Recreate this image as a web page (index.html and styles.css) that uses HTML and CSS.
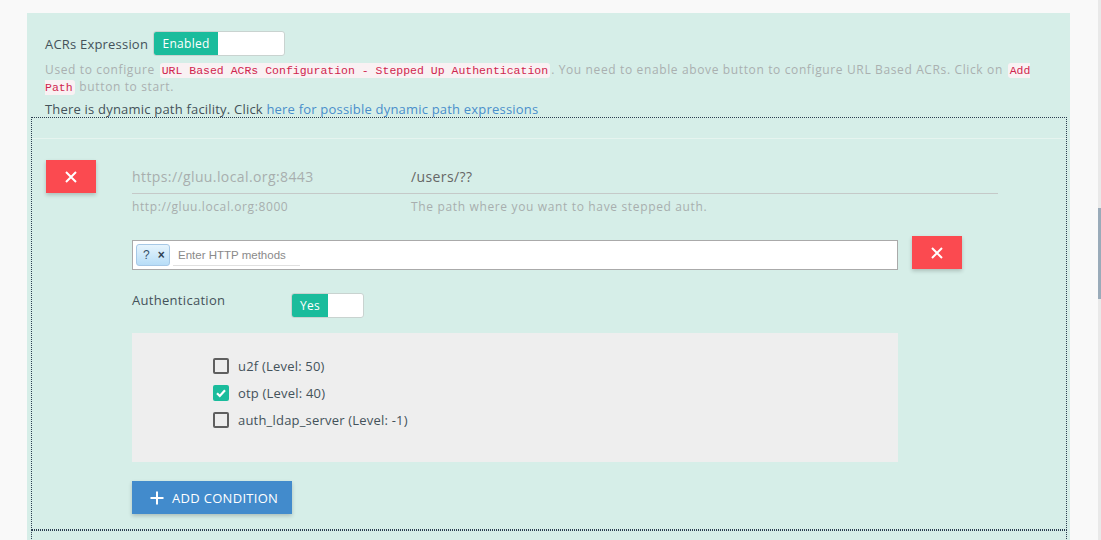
FILE: index.html
```html
<!DOCTYPE html>
<html>
<head>
<meta charset="utf-8">
<link rel="stylesheet" href="styles.css">
</head>
<body>
<div class="page">
  <div class="panel">
    <div class="acr-row">
      <span class="label">ACRs Expression</span>
      <div class="toggle toggle-wide"><span class="toggle-on">Enabled</span></div>
    </div>
    <p class="desc">Used to configure <code>URL Based ACRs Configuration - Stepped Up Authentication</code>. You need to enable above button to configure URL Based ACRs. Click on <code>Add Path</code> button to start.</p>
    <p class="dynamic">There is dynamic path facility. Click <a class="link">here for possible dynamic path expressions</a></p>

    <div class="box">
      <div class="box-head"></div>
      <div class="entry">
        <button class="btn-del">
          <svg width="14" height="14" viewBox="0 0 14 14"><path d="M2 2L12 12M12 2L2 12" stroke="#fff" stroke-width="2" fill="none"/></svg>
        </button>
        <div class="entry-body">
          <div class="url-inputs">
            <div class="url-host">https://gluu.local.org:8443</div>
            <div class="url-path">/users/??</div>
          </div>
          <div class="url-hints">
            <div class="hint-host">http://gluu.local.org:8000</div>
            <div class="hint-path">The path where you want to have stepped auth.</div>
          </div>

          <div class="methods-row">
            <div class="tag-input">
              <span class="tag">?<span class="tag-x">×</span></span>
              <span class="tag-field">Enter HTTP methods</span>
            </div>
            <button class="btn-del btn-del-small">
              <svg width="14" height="14" viewBox="0 0 14 14"><path d="M2 2L12 12M12 2L2 12" stroke="#fff" stroke-width="2" fill="none"/></svg>
            </button>
          </div>

          <div class="auth-row">
            <span class="auth-label">Authentication</span>
            <div class="toggle toggle-small"><span class="toggle-on toggle-on-small">Yes</span></div>
          </div>

          <div class="acr-list">
            <label class="check-row"><span class="check"></span>u2f (Level: 50)</label>
            <label class="check-row"><span class="check check-on"><svg width="12" height="12" viewBox="0 0 12 12"><path d="M2 6.2L4.8 9L10 3.2" stroke="#fff" stroke-width="2.2" fill="none"/></svg></span>otp (Level: 40)</label>
            <label class="check-row"><span class="check"></span>auth_ldap_server (Level: -1)</label>
          </div>

          <button class="btn-add">
            <svg width="14" height="14" viewBox="0 0 14 14"><path d="M7 0.5V13.5M0.5 7H13.5" stroke="#fff" stroke-width="2" fill="none"/></svg>
            <span>ADD CONDITION</span>
          </button>
        </div>
      </div>
    </div>
    <div class="box box-next"></div>
  </div>
</div>
<div class="scrollbar"><div class="scroll-thumb"></div></div>
</body>
</html>
```

FILE: styles.css
```css
html, body {
  margin: 0;
  padding: 0;
  height: 540px;
  overflow: hidden;
}
body {
  background: #f9f9f9;
  font-family: "Open Sans", "DejaVu Sans", sans-serif;
  color: #48555c;
}
.page {
  padding: 13px 0 0 27px;
}
.panel {
  width: 1043px;
  box-sizing: border-box;
  background: #d6eee8;
  padding: 18px 18px 0 18px;
  height: 540px;
}
.acr-row {
  display: flex;
  align-items: center;
  height: 25px;
}
.label {
  font-size: 13px;
  letter-spacing: 0.2px;
  color: #44525a;
}
.toggle {
  display: flex;
  box-sizing: border-box;
  border: 1px solid #c9d3d0;
  border-radius: 3px;
  background: #fff;
  height: 25px;
  overflow: hidden;
}
.toggle-wide {
  width: 132px;
  margin-left: 5px;
}
.toggle-on {
  background: #1abc9c;
  color: #fff;
  font-size: 12px;
  display: flex;
  align-items: center;
  justify-content: center;
  width: 64px;
  letter-spacing: 0.3px;
}
.desc {
  margin: 5px 0 0 0;
  font-size: 12px;
  line-height: 17px;
  color: #aab0b0;
  letter-spacing: 0.63px;
}
code {
  font-family: "Liberation Mono", "DejaVu Sans Mono", monospace;
  font-size: 11.5px;
  line-height: 1;
  letter-spacing: 0;
  color: #d0254e;
  background: #f9f1f3;
  padding: 1px 2px;
  margin: 0 1px;
  border-radius: 3px;
}
.dynamic {
  margin: 7px 0 0 0;
  font-size: 13px;
  line-height: 15px;
  color: #44525a;
  letter-spacing: 0.2px;
}
.link {
  color: #4a8fcb;
}
.box {
  margin: 0 -15px 0 -14px;
  border: 1px dotted #2c3e50;
  border-bottom-width: 1px;
  padding: 0 0 15px 0;
}
.box-head {
  height: 20px;
  border-bottom: 1px solid #e6f4ef;
}
.entry {
  display: flex;
  padding: 21px 0 0 14px;
}
.btn-del {
  width: 50px;
  height: 33px;
  border: none;
  background: #fb4a50;
  box-shadow: 0 2px 4px rgba(0, 0, 0, 0.2);
  display: flex;
  align-items: center;
  justify-content: center;
  padding: 0;
  flex: none;
}
.entry-body {
  margin-left: 36px;
  display: flex;
  flex-direction: column;
}
.url-inputs {
  display: flex;
  width: 866px;
  height: 33px;
  align-items: center;
  border-bottom: 1px solid #c5c9c8;
  font-size: 14px;
  letter-spacing: 0.4px;
}
.url-host {
  width: 279px;
  color: #a8aeae;
}
.url-path {
  color: #666;
}
.url-hints {
  display: flex;
  margin-top: 5px;
  font-size: 12px;
  line-height: 16px;
  color: #a8aeae;
  letter-spacing: 0.65px;
}
.hint-host {
  width: 279px;
  letter-spacing: 0.6px;
}
.methods-row {
  display: flex;
  align-items: flex-start;
  margin-top: 21px;
}
.tag-input {
  margin-top: 4px;
  width: 766px;
  height: 30px;
  box-sizing: border-box;
  border: 1px solid #aaa;
  background: #fff;
  display: flex;
  align-items: center;
  padding-left: 3px;
}
.tag {
  height: 22px;
  width: 34px;
  box-sizing: border-box;
  border: 1px solid #a6c8e6;
  border-radius: 3px;
  background: linear-gradient(#e6f4fd, #b7ddf7);
  font-family: "Liberation Sans", Arial, sans-serif;
  font-size: 12px;
  color: #35506a;
  display: flex;
  align-items: center;
  padding-left: 6px;
}
.tag-x {
  margin-left: 8px;
  font-weight: bold;
  font-size: 12px;
  color: #2f4152;
}
.tag-field {
  margin-left: 3px;
  font-family: "Liberation Sans", Arial, sans-serif;
  font-size: 11.5px;
  color: #8a8a8a;
  width: 122px;
  padding-left: 5px;
  height: 20px;
  line-height: 20px;
  border-bottom: 1px solid #e0e0e0;
}
.btn-del-small {
  margin-left: 14px;
}
.auth-row {
  display: flex;
  align-items: flex-start;
  margin-top: 23px;
  height: 25px;
}
.auth-label {
  width: 159px;
  font-size: 13px;
  line-height: 14px;
  letter-spacing: 0.3px;
  color: #44525a;
}
.toggle-small {
  width: 73px;
}
.toggle-on-small {
  width: 36px;
}
.acr-list {
  margin-top: 15px;
  width: 766px;
  height: 129px;
  box-sizing: border-box;
  background: #eeeeee;
  padding: 19px 0 0 81px;
  display: flex;
  flex-direction: column;
}
.check-row {
  display: flex;
  align-items: center;
  height: 27px;
  font-size: 13px;
  letter-spacing: 0.2px;
  color: #44525a;
}
.check {
  width: 16px;
  height: 16px;
  box-sizing: border-box;
  border: 2px solid #5f5f5f;
  border-radius: 2px;
  margin-right: 9px;
  display: flex;
  align-items: center;
  justify-content: center;
}
.check-on {
  background: #1abc9c;
  border-color: #1abc9c;
}
.btn-add {
  margin-top: 19px;
  width: 160px;
  height: 33px;
  border: none;
  background: #428bcc;
  color: #fff;
  box-shadow: 0 2px 4px rgba(0, 0, 0, 0.2);
  display: flex;
  align-items: center;
  padding: 0 0 0 18px;
  font-family: "Open Sans", "DejaVu Sans", sans-serif;
  font-size: 13px;
  letter-spacing: 0.3px;
}
.btn-add span {
  margin-left: 8px;
}
.box-next {
  border-bottom: none;
  height: 20px;
  padding: 0;
}
.scrollbar {
  position: fixed;
  top: 0;
  right: 0;
  width: 3px;
  height: 540px;
  background: #e9e9e9;
}
.scroll-thumb {
  position: absolute;
  top: 208px;
  left: 0;
  width: 3px;
  height: 91px;
  background: #9aabb9;
}
```
